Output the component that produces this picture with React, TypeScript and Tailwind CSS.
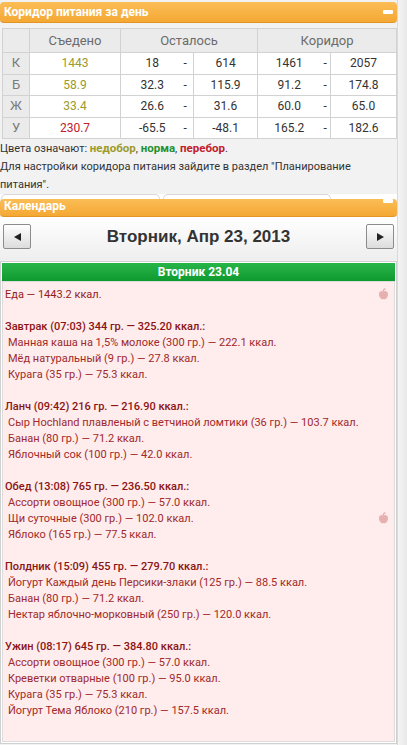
import React from "react";

const font = { fontFamily: 'Roboto, "Liberation Sans", sans-serif' };

type Row = { k: string; eaten: string; eatenColor: string; r: [string, string]; c: [string, string] };

const rows: Row[] = [
  { k: "К", eaten: "1443", eatenColor: "text-[#9c9a2c]", r: ["18", "614"], c: ["1461", "2057"] },
  { k: "Б", eaten: "58.9", eatenColor: "text-[#9c9a2c]", r: ["32.3", "115.9"], c: ["91.2", "174.8"] },
  { k: "Ж", eaten: "33.4", eatenColor: "text-[#9c9a2c]", r: ["26.6", "31.6"], c: ["60.0", "65.0"] },
  { k: "У", eaten: "230.7", eatenColor: "text-[#c0202c]", r: ["-65.5", "-48.1"], c: ["165.2", "182.6"] },
];

const meals: { title: string; items: string[] }[] = [
  {
    title: "Завтрак (07:03) 344 гр. — 325.20 ккал.:",
    items: [
      "Манная каша на 1,5% молоке (300 гр.) — 222.1 ккал.",
      "Мёд натуральный (9 гр.) — 27.8 ккал.",
      "Курага (35 гр.) — 75.3 ккал.",
    ],
  },
  {
    title: "Ланч (09:42) 216 гр. — 216.90 ккал.:",
    items: [
      "Сыр Hochland плавленый с ветчиной ломтики (36 гр.) — 103.7 ккал.",
      "Банан (80 гр.) — 71.2 ккал.",
      "Яблочный сок (100 гр.) — 42.0 ккал.",
    ],
  },
  {
    title: "Обед (13:08) 765 гр. — 236.50 ккал.:",
    items: [
      "Ассорти овощное (300 гр.) — 57.0 ккал.",
      "Щи суточные (300 гр.) — 102.0 ккал.",
      "Яблоко (165 гр.) — 77.5 ккал.",
    ],
  },
  {
    title: "Полдник (15:09) 455 гр. — 279.70 ккал.:",
    items: [
      "Йогурт Каждый день Персики-злаки (125 гр.) — 88.5 ккал.",
      "Банан (80 гр.) — 71.2 ккал.",
      "Нектар яблочно-морковный (250 гр.) — 120.0 ккал.",
    ],
  },
  {
    title: "Ужин (08:17) 645 гр. — 384.80 ккал.:",
    items: [
      "Ассорти овощное (300 гр.) — 57.0 ккал.",
      "Креветки отварные (100 гр.) — 95.0 ккал.",
      "Курага (35 гр.) — 75.3 ккал.",
      "Йогурт Тема Яблоко (210 гр.) — 157.5 ккал.",
    ],
  },
];

function Apple() {
  return (
    <svg width="11" height="12" viewBox="0 0 11 12">
      <path d="M5.5 3.6C4.2 2.6 1 2.8 1 6.3c0 2.7 2 5 3.3 5 .5 0 .8-.3 1.2-.3s.7.3 1.2.3c1.3 0 3.3-2.3 3.3-5 0-3.5-3.2-3.7-4.5-2.7z" fill="#e6b0b0" />
      <path d="M5.4 3.4C5.2 2 6 1 7.4.8" stroke="#e0a8a8" strokeWidth="1.2" fill="none" />
    </svg>
  );
}

function PanelHeader({ title, className }: { title: string; className?: string }) {
  return (
    <div
      className={
        "flex justify-between rounded-[4px] border-b border-[#e39422] bg-gradient-to-b from-[#fbbd55] to-[#f4a833] pl-[4px] pr-[4px] text-[12px] font-bold text-white " +
        (className ?? "")
      }
    >
      <span>{title}</span>
      <span className="h-[4px] w-[10px] rounded-[1px] bg-white" />
    </div>
  );
}

function NavButton({ dir }: { dir: "left" | "right" }) {
  return (
    <div className="flex h-[25px] w-[28px] items-center justify-center rounded-[2px] border border-[#8c8c8c] bg-gradient-to-b from-white to-[#dcdcdc]">
      <svg width="7" height="8" viewBox="0 0 7 8">
        {dir === "left" ? <path d="M7 0v8L0 4z" fill="#222" /> : <path d="M0 0v8l7-4z" fill="#222" />}
      </svg>
    </div>
  );
}

export default function App() {
  return (
    <div className="h-[745px] w-[407px] overflow-hidden bg-[#f2f2f2]" style={font}>
      <div className="flex">
        <div className="w-[397px] pt-[2px]">
          <PanelHeader title="Коридор питания за день" className="h-[21px] items-center" />

          <table className="ml-[2px] mt-[5px] w-[394px] table-fixed border-collapse text-[12px]">
            <colgroup>
              <col className="w-[27px]" />
              <col className="w-[91px]" />
              <col className="w-[63px]" />
              <col className="w-[10px]" />
              <col className="w-[64px]" />
              <col className="w-[63px]" />
              <col className="w-[10px]" />
              <col className="w-[66px]" />
            </colgroup>
            <thead>
              <tr className="h-[24px] bg-[#ebebeb] text-[13px] leading-[16px] text-[#6b6b6b]">
                <th className="border border-[#d2d2d2] font-normal" />
                <th className="border border-[#d2d2d2] font-normal">Съедено</th>
                <th colSpan={3} className="border border-[#d2d2d2] font-normal">Осталось</th>
                <th colSpan={3} className="border border-[#d2d2d2] font-normal">Коридор</th>
              </tr>
            </thead>
            <tbody className="leading-[14px]">
              {rows.map((r) => (
                <tr key={r.k} className="h-[21.5px] text-[#333]">
                  <td className="border border-[#d2d2d2] bg-[#ebebeb] text-center text-[13px] text-[#7a7a7a]">{r.k}</td>
                  <td className={"border border-[#d2d2d2] bg-white text-center " + r.eatenColor}>{r.eaten}</td>
                  <td className="border-y border-l border-[#d2d2d2] bg-white text-center">{r.r[0]}</td>
                  <td className="border-y border-[#d2d2d2] bg-white text-left">-</td>
                  <td className="border border-[#d2d2d2] bg-white text-center">{r.r[1]}</td>
                  <td className="border-y border-l border-[#d2d2d2] bg-white text-center">{r.c[0]}</td>
                  <td className="border-y border-[#d2d2d2] bg-white text-center">-</td>
                  <td className="border border-[#d2d2d2] bg-white text-center">{r.c[1]}</td>
                </tr>
              ))}
            </tbody>
          </table>

          <div className="text-[11px] leading-[18px] text-[#333]">
            <p>
              Цвета означают: <span className="text-[11.5px] font-bold text-[#9c9a2c]">недобор</span>,{" "}
              <span className="text-[11.5px] font-bold text-[#23912f]">норма</span>,{" "}
              <span className="text-[11.5px] font-bold text-[#c0202c]">перебор</span>.
            </p>
            <p>Для настройки коридора питания зайдите в раздел "Планирование питания".</p>
          </div>

          <div className="flex h-[5px] gap-[3px] bg-white pl-[1px]">
            <div className="h-full w-[159px] rounded-t-[6px] border-x border-t border-[#d8d8d8] bg-white" />
            <div className="h-full w-[168px] rounded-t-[6px] border-x border-t border-[#d8d8d8] bg-white" />
          </div>

          <PanelHeader title="Календарь" className="h-[18px] items-start leading-[14px]" />

          <div className="flex h-[43px] items-start justify-between bg-gradient-to-b from-white to-[#eeeeee] px-[3px] pt-[7px]">
            <NavButton dir="left" />
            <span
              className="text-[17px] font-bold leading-[25px] text-[#333]"
              style={{ fontFamily: '"Liberation Sans", Arial, sans-serif' }}
            >
              Вторник, Апр 23, 2013
            </span>
            <NavButton dir="right" />
          </div>

          <div className="mt-[1px] w-[397px] border border-[#d0d0d0] bg-white p-[1px]">
            <div className="flex h-[18px] items-center justify-center bg-gradient-to-b from-[#27b548] to-[#0d9a2e] text-[12px] font-bold text-white">
              Вторник 23.04
            </div>
            <div className="border border-[#dcdcdc] bg-[#ffecec] px-[2px] pb-[22px] pt-[5px] text-[11px] leading-[16px] text-[#941c1c]">
              <div className="flex items-start justify-between">
                <span>Еда — 1443.2 ккал.</span>
                <span className="mt-[1px] pr-[3px]"><Apple /></span>
              </div>
              {meals.map((m, i) => (
                <div key={m.title} className="mt-[16px]">
                  <div className="font-medium text-[#8a1414]">{m.title}</div>
                  {m.items.map((it, j) => (
                    <div key={j} className="flex items-start justify-between pl-[3px] text-[#a02a2a]">
                      <span>{it}</span>
                      {i === 2 && j === 1 ? <span className="mt-[1px] pr-[3px]"><Apple /></span> : null}
                    </div>
                  ))}
                </div>
              ))}
            </div>
          </div>
        </div>
        <div className="h-[745px] flex-1 border-l border-[#dadada] bg-gradient-to-r from-[#f4f4f4] to-[#e8e8e8]" />
      </div>
    </div>
  );
}
